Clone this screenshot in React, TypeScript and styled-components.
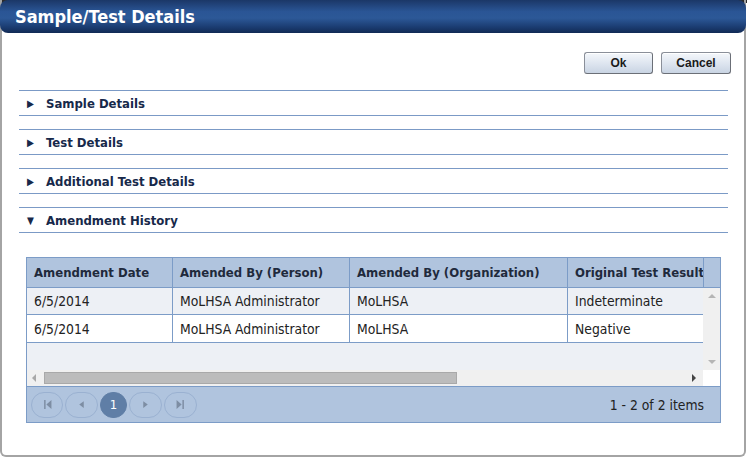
import React from "react";
import styled, { createGlobalStyle } from "styled-components";

const Global = createGlobalStyle`
  html, body { margin: 0; padding: 0; background: #ffffff; }
  body { font-family: "DejaVu Sans Condensed", "DejaVu Sans", sans-serif; }
`;

const Window = styled.div`
  width: 747px;
  height: 458px;
  box-sizing: border-box;
  background: linear-gradient(#2a2a2a 0, #2a2a2a 3px, #ffffff 3px);
`;

const Frame = styled.div`
  width: 746px;
  height: 457px;
  box-sizing: border-box;
  border-left: 2px solid #a4a4a4;
  border-right: 2px solid #a4a4a4;
  border-bottom: 2px solid #a4a4a4;
  border-bottom-left-radius: 6px;
  border-bottom-right-radius: 6px;
  background: linear-gradient(#2a2a2a 0, #2a2a2a 3px, #ffffff 3px);
  display: flex;
  flex-direction: column;
`;

const TitleBar = styled.div`
  height: 33px;
  margin: 0 -2px;
  border-radius: 8px;
  background: linear-gradient(#1b3767 0%, #2a5595 35%, #2c5897 55%, #1c3e74 80%, #112a55 100%);
  display: flex;
  align-items: center;
  padding-left: 15px;
  color: #ffffff;
  font-weight: bold;
  font-size: 18px;
`;

const Body = styled.div`
  padding: 19px 16px 0 17px;
  display: flex;
  flex-direction: column;
`;

const Actions = styled.div`
  display: flex;
  justify-content: flex-end;
  gap: 8px;
  margin-right: -3px;
  margin-bottom: 16px;
`;

const Button = styled.button<{ $w: number }>`
  width: ${(p) => p.$w}px;
  height: 22px;
  box-sizing: border-box;
  border: 1px solid #8a8f99;
  border-right-color: #6b6f77;
  border-bottom-color: #6b6f77;
  border-radius: 3px;
  background: linear-gradient(#f4f7fb 0%, #dfe6f0 50%, #c9d4e3 100%);
  font-family: "Liberation Sans", Arial, sans-serif;
  font-size: 12px;
  font-weight: bold;
  color: #1a1a1a;
  padding: 0;
  box-shadow: inset 0 1px 0 #ffffff;
`;

const Section = styled.div`
  height: 26px;
  box-sizing: border-box;
  border-top: 1px solid #7b9ac6;
  border-bottom: 1px solid #7b9ac6;
  display: flex;
  align-items: center;
  margin-bottom: 13px;
  color: #17294a;
  font-weight: bold;
  font-size: 13px;
`;

const Arrow = styled.span`
  width: 27px;
  padding-left: 8px;
  box-sizing: border-box;
  font-size: 10px;
  color: #17294a;
`;

const Grid = styled.div`
  margin: 11px 7px 0 7px;
  border: 1px solid #7c9cc7;
  display: flex;
  flex-direction: column;
  font-size: 13.8px;
  color: #222;
`;

const HeaderRow = styled.div`
  display: flex;
  height: 29px;
  background: #b0c4de;
  border-bottom: 1px solid #7c9cc7;
  overflow: hidden;
`;

const HeadCell = styled.div<{ $w: number }>`
  flex: 0 0 ${(p) => p.$w}px;
  box-sizing: border-box;
  padding-left: 7px;
  display: flex;
  align-items: center;
  white-space: nowrap;
  overflow: hidden;
  font-weight: bold;
  font-size: 13px;
  color: #1f2a3c;
  border-right: 1px solid #7c9cc7;
`;

const HeadFiller = styled.div`
  flex: 1;
`;

const Content = styled.div`
  display: flex;
  height: 82px;
`;

const DataArea = styled.div`
  width: 676px;
  background: #edf0f5;
  overflow: hidden;
`;

const Row = styled.div<{ $alt?: boolean; $h: number }>`
  display: flex;
  height: ${(p) => p.$h}px;
  box-sizing: border-box;
  padding-bottom: 1px;
  background: ${(p) => (p.$alt ? "#edf0f5" : "#ffffff")};
  border-bottom: 1px solid #7c9cc7;
`;

const Cell = styled.div<{ $w: number }>`
  flex: 0 0 ${(p) => p.$w}px;
  box-sizing: border-box;
  padding-left: 7px;
  display: flex;
  align-items: center;
  white-space: nowrap;
  overflow: hidden;
  border-right: 1px solid #7c9cc7;
  margin-bottom: -1px;
`;

const VScroll = styled.div`
  width: 17px;
  background: #f0f0f0;
  display: flex;
  flex-direction: column;
  justify-content: space-between;
  align-items: center;
  padding: 4px 0;
  box-sizing: border-box;
`;

const HScrollRow = styled.div`
  display: flex;
  height: 16px;
`;

const HScroll = styled.div`
  width: 676px;
  background: #f0f0f0;
  display: flex;
  align-items: center;
  padding: 0 5px 0 3px;
  box-sizing: border-box;
  gap: 6px;
`;

const Corner = styled.div`
  width: 17px;
  background: #ffffff;
`;

const Track = styled.div`
  flex: 1;
  height: 12px;
  display: flex;
`;

const Thumb = styled.div`
  width: 413px;
  height: 12px;
  box-sizing: border-box;
  background: #bcbcbc;
  border: 1px solid #a9a9a9;
`;

const Pager = styled.div`
  height: 35px;
  background: #b0c4de;
  border-top: 1px solid #7c9cc7;
  display: flex;
  align-items: center;
  padding-left: 4px;
  padding-right: 16px;
`;

const PageBtn = styled.div<{ $active?: boolean; $w?: number }>`
  width: ${(p) => p.$w ?? 31}px;
  height: 26px;
  box-sizing: border-box;
  border-radius: 13px;
  border: 1px solid ${(p) => (p.$active ? "#5f7ea6" : "#9ab1d1")};
  background: ${(p) => (p.$active ? "#5f7ea6" : "transparent")};
  color: #ffffff;
  display: flex;
  align-items: center;
  justify-content: center;
  font-size: 13px;
  margin-right: 2px;
`;

const PagerInfo = styled.div`
  margin-left: auto;
  color: #222;
`;

const Tri = ({ d, color = "#8a8a8a", size = 8 }: { d: string; color?: string; size?: number }) => (
  <svg width={size} height={size} viewBox="0 0 8 8">
    <path d={d} fill={color} />
  </svg>
);

const cols = [146, 177, 218, 136];
const heads = ["Amendment Date", "Amended By (Person)", "Amended By (Organization)", "Original Test Result"];
const rows = [
  ["6/5/2014", "MoLHSA Administrator", "MoLHSA", "Indeterminate"],
  ["6/5/2014", "MoLHSA Administrator", "MoLHSA", "Negative"],
];

export default function App() {
  return (
    <>
      <Global />
      <Window>
        <Frame>
          <TitleBar>Sample/Test Details</TitleBar>
          <Body>
            <Actions>
              <Button $w={69}>Ok</Button>
              <Button $w={70}>Cancel</Button>
            </Actions>
            {["Sample Details", "Test Details", "Additional Test Details"].map((t) => (
              <Section key={t}>
                <Arrow>▶</Arrow>
                {t}
              </Section>
            ))}
            <Section>
              <Arrow>▼</Arrow>
              Amendment History
            </Section>
            <Grid>
              <HeaderRow>
                {heads.map((h, i) => (
                  <HeadCell key={h} $w={cols[i]}>
                    {h}
                  </HeadCell>
                ))}
                <HeadFiller />
              </HeaderRow>
              <Content>
                <DataArea>
                  {rows.map((r, ri) => (
                    <Row key={ri} $alt={ri === 0} $h={ri === 0 ? 27 : 28}>
                      {r.map((c, ci) => (
                        <Cell key={ci} $w={cols[ci]}>
                          {c}
                        </Cell>
                      ))}
                    </Row>
                  ))}
                </DataArea>
                <VScroll>
                  <Tri d="M0 6 L4 2 L8 6 Z" color="#b5b5b5" />
                  <Tri d="M0 2 L4 6 L8 2 Z" color="#b5b5b5" />
                </VScroll>
              </Content>
              <HScrollRow>
                <HScroll>
                  <Tri d="M6 0 L2 4 L6 8 Z" color="#a8a8a8" />
                  <Track>
                    <Thumb />
                  </Track>
                  <Tri d="M2 0 L6 4 L2 8 Z" color="#444" />
                </HScroll>
                <Corner />
              </HScrollRow>
              <Pager>
                <PageBtn $w={32}>
                  <Tri size={9} d="M1 0 H2.3 V8 H1 Z M7.5 0 L3 4 L7.5 8 Z" color="#7d8da3" />
                </PageBtn>
                <PageBtn $w={33}>
                  <Tri size={9} d="M6 1 L2 4 L6 7 Z" color="#7d8da3" />
                </PageBtn>
                <PageBtn $active $w={27}>1</PageBtn>
                <PageBtn $w={33}>
                  <Tri size={9} d="M2 1 L6 4 L2 7 Z" color="#7d8da3" />
                </PageBtn>
                <PageBtn $w={33}>
                  <Tri size={9} d="M0.5 0 L5 4 L0.5 8 Z M5.7 0 H7 V8 H5.7 Z" color="#7d8da3" />
                </PageBtn>
                <PagerInfo>1 - 2 of 2 items</PagerInfo>
              </Pager>
            </Grid>
          </Body>
        </Frame>
      </Window>
    </>
  );
}
